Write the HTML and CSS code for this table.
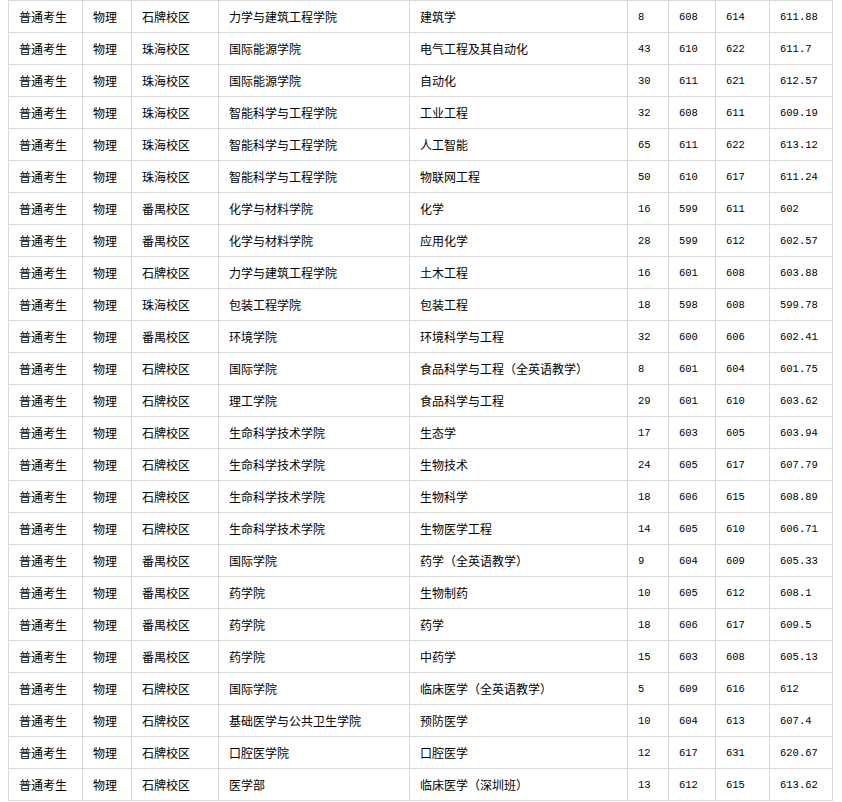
FILE: index.html
```html
<!DOCTYPE html>
<html lang="zh-CN">
<head>
<meta charset="utf-8">
<title>录取分数</title>
<link rel="stylesheet" href="styles.css">
</head>
<body>
<table class="scores">
<colgroup>
<col class="c1"><col class="c2"><col class="c3"><col class="c4"><col class="c5"><col class="c6"><col class="c7"><col class="c8"><col class="c9">
</colgroup>
<tbody>
<tr><td>普通考生</td><td>物理</td><td>石牌校区</td><td>力学与建筑工程学院</td><td>建筑学</td><td class="n">8</td><td class="n">608</td><td class="n">614</td><td class="n">611.88</td></tr>
<tr><td>普通考生</td><td>物理</td><td>珠海校区</td><td>国际能源学院</td><td>电气工程及其自动化</td><td class="n">43</td><td class="n">610</td><td class="n">622</td><td class="n">611.7</td></tr>
<tr><td>普通考生</td><td>物理</td><td>珠海校区</td><td>国际能源学院</td><td>自动化</td><td class="n">30</td><td class="n">611</td><td class="n">621</td><td class="n">612.57</td></tr>
<tr><td>普通考生</td><td>物理</td><td>珠海校区</td><td>智能科学与工程学院</td><td>工业工程</td><td class="n">32</td><td class="n">608</td><td class="n">611</td><td class="n">609.19</td></tr>
<tr><td>普通考生</td><td>物理</td><td>珠海校区</td><td>智能科学与工程学院</td><td>人工智能</td><td class="n">65</td><td class="n">611</td><td class="n">622</td><td class="n">613.12</td></tr>
<tr><td>普通考生</td><td>物理</td><td>珠海校区</td><td>智能科学与工程学院</td><td>物联网工程</td><td class="n">50</td><td class="n">610</td><td class="n">617</td><td class="n">611.24</td></tr>
<tr><td>普通考生</td><td>物理</td><td>番禺校区</td><td>化学与材料学院</td><td>化学</td><td class="n">16</td><td class="n">599</td><td class="n">611</td><td class="n">602</td></tr>
<tr><td>普通考生</td><td>物理</td><td>番禺校区</td><td>化学与材料学院</td><td>应用化学</td><td class="n">28</td><td class="n">599</td><td class="n">612</td><td class="n">602.57</td></tr>
<tr><td>普通考生</td><td>物理</td><td>石牌校区</td><td>力学与建筑工程学院</td><td>土木工程</td><td class="n">16</td><td class="n">601</td><td class="n">608</td><td class="n">603.88</td></tr>
<tr><td>普通考生</td><td>物理</td><td>珠海校区</td><td>包装工程学院</td><td>包装工程</td><td class="n">18</td><td class="n">598</td><td class="n">608</td><td class="n">599.78</td></tr>
<tr><td>普通考生</td><td>物理</td><td>番禺校区</td><td>环境学院</td><td>环境科学与工程</td><td class="n">32</td><td class="n">600</td><td class="n">606</td><td class="n">602.41</td></tr>
<tr><td>普通考生</td><td>物理</td><td>石牌校区</td><td>国际学院</td><td>食品科学与工程（全英语教学）</td><td class="n">8</td><td class="n">601</td><td class="n">604</td><td class="n">601.75</td></tr>
<tr><td>普通考生</td><td>物理</td><td>石牌校区</td><td>理工学院</td><td>食品科学与工程</td><td class="n">29</td><td class="n">601</td><td class="n">610</td><td class="n">603.62</td></tr>
<tr><td>普通考生</td><td>物理</td><td>石牌校区</td><td>生命科学技术学院</td><td>生态学</td><td class="n">17</td><td class="n">603</td><td class="n">605</td><td class="n">603.94</td></tr>
<tr><td>普通考生</td><td>物理</td><td>石牌校区</td><td>生命科学技术学院</td><td>生物技术</td><td class="n">24</td><td class="n">605</td><td class="n">617</td><td class="n">607.79</td></tr>
<tr><td>普通考生</td><td>物理</td><td>石牌校区</td><td>生命科学技术学院</td><td>生物科学</td><td class="n">18</td><td class="n">606</td><td class="n">615</td><td class="n">608.89</td></tr>
<tr><td>普通考生</td><td>物理</td><td>石牌校区</td><td>生命科学技术学院</td><td>生物医学工程</td><td class="n">14</td><td class="n">605</td><td class="n">610</td><td class="n">606.71</td></tr>
<tr><td>普通考生</td><td>物理</td><td>番禺校区</td><td>国际学院</td><td>药学（全英语教学）</td><td class="n">9</td><td class="n">604</td><td class="n">609</td><td class="n">605.33</td></tr>
<tr><td>普通考生</td><td>物理</td><td>番禺校区</td><td>药学院</td><td>生物制药</td><td class="n">10</td><td class="n">605</td><td class="n">612</td><td class="n">608.1</td></tr>
<tr><td>普通考生</td><td>物理</td><td>番禺校区</td><td>药学院</td><td>药学</td><td class="n">18</td><td class="n">606</td><td class="n">617</td><td class="n">609.5</td></tr>
<tr><td>普通考生</td><td>物理</td><td>番禺校区</td><td>药学院</td><td>中药学</td><td class="n">15</td><td class="n">603</td><td class="n">608</td><td class="n">605.13</td></tr>
<tr><td>普通考生</td><td>物理</td><td>石牌校区</td><td>国际学院</td><td>临床医学（全英语教学）</td><td class="n">5</td><td class="n">609</td><td class="n">616</td><td class="n">612</td></tr>
<tr><td>普通考生</td><td>物理</td><td>石牌校区</td><td>基础医学与公共卫生学院</td><td>预防医学</td><td class="n">10</td><td class="n">604</td><td class="n">613</td><td class="n">607.4</td></tr>
<tr><td>普通考生</td><td>物理</td><td>石牌校区</td><td>口腔医学院</td><td>口腔医学</td><td class="n">12</td><td class="n">617</td><td class="n">631</td><td class="n">620.67</td></tr>
<tr><td>普通考生</td><td>物理</td><td>石牌校区</td><td>医学部</td><td>临床医学（深圳班）</td><td class="n">13</td><td class="n">612</td><td class="n">615</td><td class="n">613.62</td></tr>
</tbody>
</table>
</body>
</html>
```
FILE: styles.css
```css
html, body {
  background: #ffffff;
}
body {
  margin: 0 0 0 8px;
  font-family: "Noto Sans CJK SC", "Noto Sans", sans-serif;
  font-size: 12px;
  color: #000000;
}
.scores {
  border-collapse: collapse;
  table-layout: fixed;
  width: 824px;
}
.scores td {
  border: 1px solid #d9d9d9;
  height: 32px;
  padding: 0 0 0 10px;
  line-height: 16px;
  white-space: nowrap;
  vertical-align: middle;
  box-sizing: border-box;
}
.scores td.n {
  font-family: "Liberation Mono", "DejaVu Sans Mono", monospace;
  font-size: 10.5px;
}
.c1 { width: 74px; }
.c2 { width: 49px; }
.c3 { width: 87px; }
.c4 { width: 191px; }
.c5 { width: 218px; }
.c6 { width: 41px; }
.c7 { width: 47px; }
.c8 { width: 54px; }
.c9 { width: 63px; }
```
